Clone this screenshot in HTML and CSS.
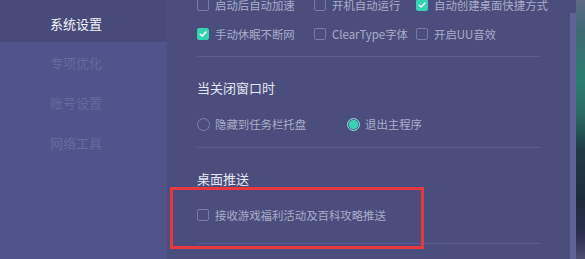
FILE: index.html
```html
<!DOCTYPE html>
<html lang="zh-CN">
<head>
<meta charset="utf-8">
<link rel="stylesheet" href="styles.css">
</head>
<body>
<div class="window">
  <nav class="sidebar">
    <div class="nav-item active">系统设置</div>
    <div class="nav-item">专项优化</div>
    <div class="nav-item">账号设置</div>
    <div class="nav-item">网络工具</div>
  </nav>
  <main class="content">
    <div class="inner">
      <section class="group">
        <div class="check-grid">
          <label class="opt"><span class="box"></span>启动后自动加速</label>
          <label class="opt"><span class="box"></span>开机自动运行</label>
          <label class="opt"><span class="box on"><svg viewBox="0 0 12 12"><path d="M2.6 6.2 L5 8.5 L9.6 3.6" fill="none" stroke="#fff" stroke-width="1.7" stroke-linecap="round" stroke-linejoin="round"/></svg></span>自动创建桌面快捷方式</label>
          <label class="opt"><span class="box on"><svg viewBox="0 0 12 12"><path d="M2.6 6.2 L5 8.5 L9.6 3.6" fill="none" stroke="#fff" stroke-width="1.7" stroke-linecap="round" stroke-linejoin="round"/></svg></span>手动休眠不断网</label>
          <label class="opt"><span class="box"></span>ClearType字体</label>
          <label class="opt"><span class="box"></span>开启UU音效</label>
        </div>
      </section>
      <section class="group">
        <h3 class="title">当关闭窗口时</h3>
        <div class="radio-row">
          <label class="opt"><span class="radio"></span>隐藏到任务栏托盘</label>
          <label class="opt"><span class="radio on"></span>退出主程序</label>
        </div>
      </section>
      <section class="group last">
        <h3 class="title">桌面推送</h3>
        <label class="opt"><span class="box"></span>接收游戏福利活动及百科攻略推送</label>
      </section>
    </div>
    <div class="scrollbar"><div class="thumb"></div></div>
  </main>
  <div class="backdrop"></div>
  <div class="highlight"></div>
</div>
</body>
</html>
```
FILE: styles.css
```css
* { box-sizing: border-box; margin: 0; padding: 0; }
html, body { width: 585px; height: 259px; overflow: hidden; }
body {
  font-family: "Noto Sans CJK SC", "Noto Sans", sans-serif;
  background: #4b4e7c;
}
.window {
  position: relative;
  display: flex;
  width: 585px;
  height: 259px;
}
.sidebar {
  width: 167px;
  flex: none;
  background: #50548a;
  display: flex;
  flex-direction: column;
}
.nav-item {
  height: 40px;
  padding-left: 50px;
  display: flex;
  align-items: center;
  font-size: 13px;
  color: #646a9c;
}
.nav-item.active {
  height: 42px;
  padding-top: 5px;
  background: #484b79;
  color: #f2f3f8;
}
.content {
  flex: 1;
  display: flex;
  background: #4b4e7c;
  overflow: hidden;
}
.inner {
  width: 403px;
  padding: 0 30px;
  margin-top: -5px;
}
.group {
  border-bottom: 1px solid #5a5e93;
  padding-bottom: 12px;
}
.group + .group { padding-top: 21px; padding-bottom: 13px; }
.group.last { padding-bottom: 18px; }
.check-grid {
  display: grid;
  grid-template-columns: 117px 102px auto;
  row-gap: 9px;
}
.opt {
  display: flex;
  align-items: center;
  height: 20px;
  font-size: 11.4px;
  color: #a9acca;
  white-space: nowrap;
}
.box {
  width: 12px;
  height: 12px;
  border: 1px solid #777ba6;
  border-radius: 2px;
  margin-right: 6px;
  flex: none;
  display: flex;
}
.box.on {
  background: #34d3b4;
  border-color: #34d3b4;
}
.box svg { width: 100%; height: 100%; }
.title {
  font-size: 13px;
  font-weight: normal;
  color: #e4e5f2;
  line-height: 20px;
  margin-bottom: 16px;
}
.radio-row {
  display: grid;
  grid-template-columns: 150px auto;
}
.radio {
  width: 13px;
  height: 13px;
  border: 1px solid #7d81ab;
  border-radius: 50%;
  margin-right: 5px;
  flex: none;
}
.radio.on {
  border: 1px solid #8fe3d3;
  background: radial-gradient(circle, #34d3b4 0 4.2px, #5b5f92 4.8px);
}
.scrollbar {
  width: 6px;
  margin-left: auto;
  padding-top: 13px;
  flex: none;
}
.thumb {
  height: 100%;
  background: #5e6294;
}
.backdrop {
  width: 9px;
  flex: none;
  background: linear-gradient(180deg, #5d6a86 0px, #3e6a72 30px, #2b7d70 80px, #2a6a62 115px, #1f3a44 150px, #1c2b3a 200px, #2a2f4e 235px, #4a4e70 259px);
}
.highlight {
  position: absolute;
  left: 170px;
  top: 187px;
  width: 254px;
  height: 62px;
  border: 3px solid #e5383f;
}
```
